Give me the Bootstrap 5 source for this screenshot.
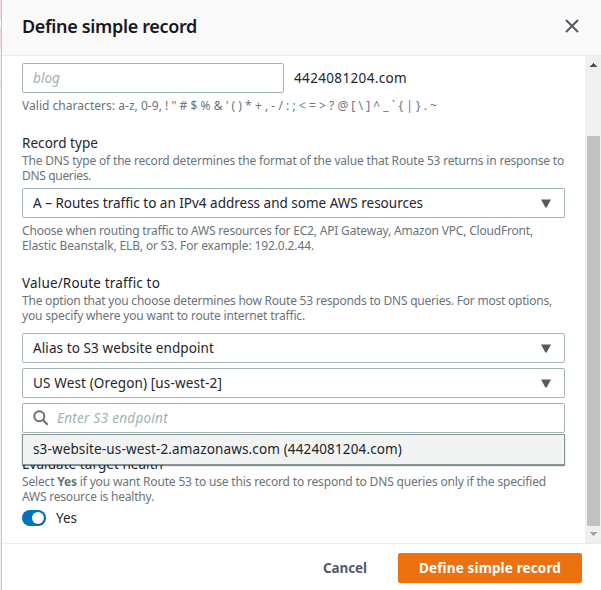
<!DOCTYPE html>
<html lang="en">
<head>
<meta charset="utf-8">
<meta name="viewport" content="width=device-width, initial-scale=1">
<title>Define simple record</title>
<link href="https://cdn.jsdelivr.net/npm/bootstrap@5.3.0/dist/css/bootstrap.min.css" rel="stylesheet">
<style>
body{font-family:"Noto Sans","Open Sans",sans-serif;font-size:13.5px;line-height:20px;color:#22252b;height:590px;background:#fff}
.page-sliver{width:2px;background:linear-gradient(#f2dcda 0 20px,#f5f5f5 20px 27px,#f2dcda 27px 48px,#eef1f1 48px 82px,#e2e6e6 82px 88px,#eef1f1 88px);border-right:1px solid #c3c9c9}
.dialog-head{height:56px;background:#fafafa;border-bottom:1px solid #eaeded;padding:0 21px 4px 20px}
.dialog-head h1{font-size:18px;line-height:22px;font-weight:600;margin:0;color:#16191f}
.dialog-main{height:487px}
.fields{padding:7px 20px 0;width:583px}
.control{height:30px;border:1px solid #a5b5b6;border-radius:2px;background:#fff;padding:0 13px 0 10px}
.control.short{width:262px;margin-right:10px}
.ghost{font-style:italic;color:#a2b1b1}
.hint{font-size:12px;line-height:15px;color:#6b737b}
.field-label{line-height:19px;height:19px}
.ln{white-space:nowrap}
.space-5{margin-top:5px}
.section-top{margin-top:21px}
.stack{gap:5px;margin-top:10px}
.evaluate{margin-top:22px}
.yes-row{gap:10px;margin-top:4px}
.options{top:31px;left:0;right:0;height:31px;background:#f2f3f3;border:1px solid #879596;box-shadow:0 1px 1px 0 rgba(0,28,36,.5);padding:0 10px 1px;z-index:2}
.toggle{width:24px;height:16px;border-radius:8px;background:#0073bb;padding:2px}
.knob{width:12px;height:12px;border-radius:50%;background:#fff;box-shadow:1px 1px 1px rgba(0,28,36,.3)}
.scroller{width:16px;background:#f0f0f0;padding:7px 1px 7px 2px}
.thumb{background:#c1c1c1;width:13px;height:390px;margin-bottom:6px}
.dialog-foot{height:47px;border-top:1px solid #eaeded;padding:2px 19px 0 0}
.btn-plain{color:#545b64;font-size:13.5px;font-weight:700;line-height:20px;padding:0;border:0;margin-right:31px}
.btn-main{width:184px;height:30px;border-radius:2px;border:0;background:#ec7211;color:#fff;font-size:13.5px;font-weight:700;line-height:20px;padding:0}
svg{display:block;flex:none}
</style>
<script src="https://cdn.jsdelivr.net/npm/bootstrap@5.3.0/dist/js/bootstrap.bundle.min.js"></script>
</head>
<body class="d-flex overflow-hidden">
<div class="page-sliver flex-shrink-0"></div>
<div class="d-flex flex-column flex-grow-1">
  <header class="dialog-head d-flex align-items-center justify-content-between">
    <h1><span class="ln" data-w="175">Define simple record</span></h1>
    <svg width="16" height="16" viewBox="0 0 16 16" fill="none" stroke="#545b64" stroke-width="2"><path d="M2 2l12 12M14 2L2 14"/></svg>
  </header>
  <main class="dialog-main d-flex justify-content-between">
    <div class="fields">
      <div class="d-flex align-items-center">
        <div class="control short d-flex align-items-center"><span class="ln ghost" data-w="27">blog</span></div>
        <span class="ln" data-w="113">4424081204.com</span>
      </div>
      <div class="hint space-5"><span class="ln" data-w="415">Valid characters: a-z, 0-9, ! " # $ % &amp; ' ( ) * + , - / : ; &lt; = &gt; ? @ [ \ ] ^ _ ` { | } . ~</span></div>
      <div class="field-label section-top"><span class="ln" data-w="76">Record type</span></div>
      <div class="hint"><span class="ln" data-w="542">The DNS type of the record determines the format of the value that Route 53 returns in response to</span><br><span class="ln" data-w="69">DNS queries.</span></div>
      <div class="control space-5 d-flex align-items-center justify-content-between"><span class="ln" data-w="390">A – Routes traffic to an IPv4 address and some AWS resources</span><svg width="10" height="9"><path d="M0 0.5h10L5.6 8.6h-1.2z" fill="#545b64"/></svg></div>
      <div class="hint space-5"><span class="ln" data-w="511">Choose when routing traffic to AWS resources for EC2, API Gateway, Amazon VPC, CloudFront,</span><br><span class="ln" data-w="292">Elastic Beanstalk, ELB, or S3. For example: 192.0.2.44.</span></div>
      <div class="field-label section-top"><span class="ln" data-w="138">Value/Route traffic to</span></div>
      <div class="hint"><span class="ln" data-w="530">The option that you choose determines how Route 53 responds to DNS queries. For most options,</span><br><span class="ln" data-w="283">you specify where you want to route internet traffic.</span></div>
      <div class="stack d-flex flex-column">
        <div class="control d-flex align-items-center justify-content-between"><span class="ln" data-w="181">Alias to S3 website endpoint</span><svg width="10" height="9"><path d="M0 0.5h10L5.6 8.6h-1.2z" fill="#545b64"/></svg></div>
        <div class="control d-flex align-items-center justify-content-between"><span class="ln" data-w="189">US West (Oregon) [us-west-2]</span><svg width="10" height="9"><path d="M0 0.5h10L5.6 8.6h-1.2z" fill="#545b64"/></svg></div>
        <div class="position-relative">
          <div class="control d-flex align-items-center"><svg class="me-2" width="16" height="16" viewBox="0 0 16 16" fill="none" stroke="#687078" stroke-width="2"><circle cx="6.3" cy="6.3" r="5"/><path d="M10 10l4.7 4.7"/></svg><span class="ln ghost" data-w="111">Enter S3 endpoint</span></div>
          <div class="options position-absolute d-flex align-items-center"><span class="ln" data-w="369">s3-website-us-west-2.amazonaws.com (4424081204.com)</span></div>
        </div>
      </div>
      <div class="field-label evaluate"><span class="ln" data-w="141">Evaluate target health</span></div>
      <div class="hint"><span class="ln" data-w="524">Select <b>Yes</b> if you want Route 53 to use this record to respond to DNS queries only if the specified</span><br><span class="ln" data-w="132">AWS resource is healthy.</span></div>
      <div class="yes-row d-flex align-items-center"><div class="toggle d-flex justify-content-end"><div class="knob"></div></div><span class="ln" data-w="21">Yes</span></div>
    </div>
    <div class="scroller d-flex flex-column align-items-center justify-content-between">
      <svg width="7" height="4"><path d="M3 0h1v1h1v1h1v1h1v1H0V3h1V2h1V1h1z" fill="#505050"/></svg>
      <div class="d-flex flex-column"><div class="thumb"></div><svg class="align-self-center" width="7" height="4"><path d="M0 0h7v1H6v1H5v1H4v1H3V3H2V2H1V1H0z" fill="#a3a3a3"/></svg></div>
    </div>
  </main>
  <footer class="dialog-foot d-flex align-items-center justify-content-end">
    <button class="btn btn-plain" type="button"><span class="ln" data-w="44">Cancel</span></button>
    <button class="btn btn-main" type="button"><span class="ln" data-w="142">Define simple record</span></button>
  </footer>
</div>
<script>
document.querySelectorAll('.ln').forEach(function(el){
  var w = el.getBoundingClientRect().width, n = el.textContent.length;
  el.style.letterSpacing = ((el.dataset.w - w) / n) + 'px';
});
</script>
</body>
</html>
